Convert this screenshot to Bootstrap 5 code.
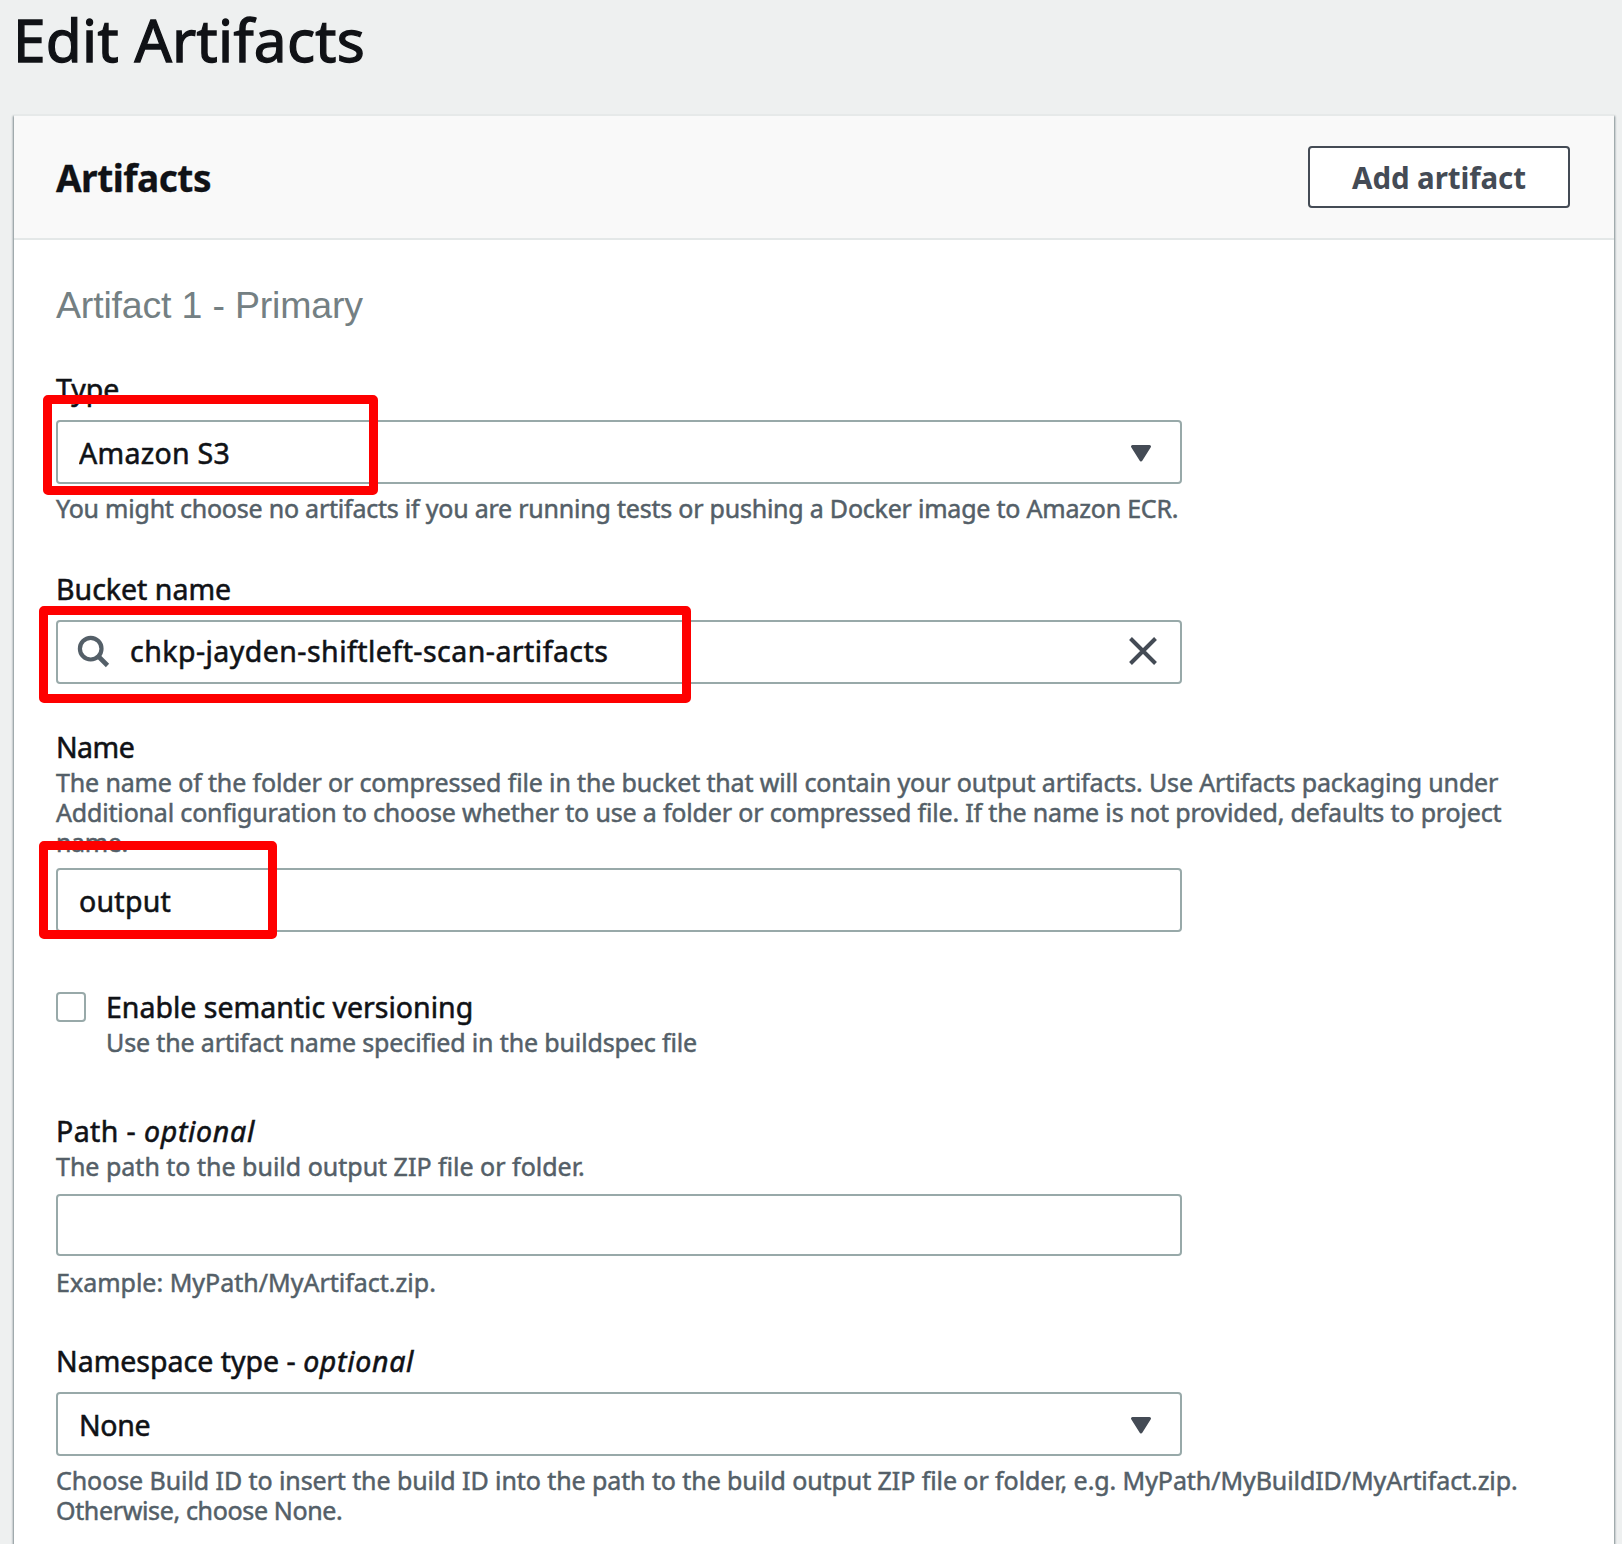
<!DOCTYPE html>
<html lang="en">
<head>
<meta charset="utf-8">
<title>Edit Artifacts</title>
<link href="https://cdn.jsdelivr.net/npm/bootstrap@5.3.0/dist/css/bootstrap.min.css" rel="stylesheet">
<style>
  body { background: #eef0f0; color: #101216; font-family: "Noto Sans", "Open Sans", sans-serif; height: 1544px; overflow: hidden; -webkit-text-stroke: .55px; }
  .page-title { font-size: 58.5px; line-height: 78px; font-weight: 400; margin: 0 0 36px 13px; letter-spacing: .3px; -webkit-text-stroke: 1.3px; }
  .panel { margin: 0 8px 0 14px; min-height: 1450px; border: 0; border-top: 2px solid #e6e9e9; border-radius: 0; background: #fff; box-shadow: 1px 2px 2px #001c2470, -1px 2px 2px #001c2470; color: inherit; }
  .panel-head { height: 124px; background: #f9f9f9; border-bottom: 2px solid #e4e8e8; padding: 0 44px 0 42px; }
  .panel-head h2 { font-size: 37px; line-height: 50px; font-weight: 700; margin: 0; padding-top: 1px; letter-spacing: -.5px; -webkit-text-stroke: .3px; }
  .btn-add { width: 262px; height: 62px; padding: 2px 0 0; border: 2px solid #444b55; border-radius: 4px; background: #fff; color: #444b55; font-size: 29.5px; font-weight: 700; letter-spacing: -.1px; -webkit-text-stroke: 0; }
  .panel-body { padding: 43px 42px 0; }
  .section-name { font-family: "Liberation Sans", Arial, sans-serif; font-size: 37.5px; line-height: 44px; font-weight: 400; color: #748083; margin: 0 0 42px; letter-spacing: -.18px; -webkit-text-stroke: 0; }
  .field-label { display: block; font-size: 28.5px; line-height: 40px; margin: 0; letter-spacing: 0; }
  .field-label em { letter-spacing: .7px; }
  .hint { font-size: 25px; line-height: 30px; color: #545f68; margin: 0; white-space: nowrap; letter-spacing: -.14px; -webkit-text-stroke: .5px; }
  .ls-0 { letter-spacing: 0; }
  .ls-wide { letter-spacing: .4px; }
  .ls-tight { letter-spacing: -.22px; }
  .ls-mid { letter-spacing: -.17px; }
  .ls-snug { letter-spacing: -.08px; }
  .ls-close { letter-spacing: -.35px; }
  .field { position: relative; width: 1126px; margin-top: 11px; }
  .field .form-control, .field .form-select { height: 64px; padding: 1px 60px 0 21px; border: 2px solid #98a9a9; border-radius: 4px; background: #fff; color: #101216; font-size: 28.5px; line-height: 59px; letter-spacing: .25px; -webkit-text-stroke: .55px; }
  .field .form-select { padding-top: 2px; line-height: 58px; letter-spacing: .3px; }
  .field .form-select.plain { letter-spacing: -.3px; }
  .field .form-control.has-icon { padding: 0 60px 2px 72px; line-height: 58px; letter-spacing: .46px; }
  .field .form-control.slim { height: 62px; }
  .field-path { margin-top: 13px; }
  .field-icon { position: absolute; pointer-events: none; }
  .icon-caret { left: 1074px; top: 23.5px; }
  .icon-search { left: 21px; top: 15px; }
  .icon-clear { left: 1071px; top: 15px; }
  .callout { position: absolute; border: 9px solid #fe0000; border-radius: 5px; pointer-events: none; z-index: 2; }
  .callout-type { left: -13px; top: -25px; width: 335px; height: 100px; }
  .callout-bucket { left: -17px; top: -14px; width: 652px; height: 97px; }
  .callout-name { left: -17px; top: -27px; width: 238px; height: 98px; }
  .after-field { margin: 9px 0 46px; }
  .after-path { margin: 11px 0 44px; }
  .check-row { margin: 55px 0 54px; gap: 20px; }
  .name-label { margin-top: 43px; letter-spacing: -.55px; }
  .form-check-input.box { width: 30px; height: 30px; margin: 5px 0 0; border: 2px solid #98a9a9; border-radius: 4px; float: none; flex: none; }
</style>
<script src="https://cdn.jsdelivr.net/npm/bootstrap@5.3.0/dist/js/bootstrap.bundle.min.js"></script>
</head>
<body>
<h1 class="page-title">Edit Artifacts</h1>
<main class="card panel">
  <div class="panel-head d-flex align-items-center justify-content-between">
    <h2>Artifacts</h2>
    <button type="button" class="btn btn-add">Add artifact</button>
  </div>
  <form class="panel-body">
    <h3 class="section-name">Artifact 1 - Primary</h3>

    <label class="field-label" for="type">Type</label>
    <div class="field">
      <select class="form-select" id="type"><option>Amazon S3</option></select>
      <svg class="field-icon icon-caret" width="22" height="19" viewBox="0 0 22 19"><path d="M2.500 2.500h17L11 16z" fill="#444b55" stroke="#444b55" stroke-width="3" stroke-linejoin="round"/></svg>
      <div class="callout callout-type"></div>
    </div>
    <p class="hint after-field ls-tight">You might choose no artifacts if you are running tests or pushing a Docker image to Amazon ECR.</p>

    <label class="field-label" for="bucket">Bucket name</label>
    <div class="field">
      <input class="form-control has-icon" id="bucket" value="chkp-jayden-shiftleft-scan-artifacts">
      <svg class="field-icon icon-search" width="34" height="34" viewBox="0 0 34 34" fill="none" stroke="#545f68" stroke-width="4.200"><circle cx="13.700" cy="13.700" r="10.800"/><path d="M21.500 21.500l9 9" stroke-width="4.600"/></svg>
      <svg class="field-icon icon-clear" width="32" height="32" viewBox="0 0 32 32" fill="none" stroke="#444b55" stroke-width="4"><path d="M3.500 3.500l25 25M28.500 3.500l-25 25"/></svg>
      <div class="callout callout-bucket"></div>
    </div>

    <label class="field-label name-label" for="name">Name</label>
    <p class="hint">The name of the folder or compressed file in the bucket that will contain your output artifacts. Use Artifacts packaging under<br><span class="ls-mid">Additional configuration to choose whether to use a folder or compressed file. If the name is not provided, defaults to project</span><br><span class="ls-close">name.</span></p>
    <div class="field">
      <input class="form-control" id="name" value="output">
      <div class="callout callout-name"></div>
    </div>

    <div class="check-row d-flex">
      <input class="form-check-input box" type="checkbox" id="semver">
      <div>
        <label class="field-label" for="semver">Enable semantic versioning</label>
        <p class="hint">Use the artifact name specified in the buildspec file</p>
      </div>
    </div>

    <label class="field-label" for="path"><span class="ls-wide">Path - </span><em>optional</em></label>
    <p class="hint ls-0">The path to the build output ZIP file or folder.</p>
    <div class="field field-path"><input class="form-control slim" id="path"></div>
    <p class="hint after-path ls-0">Example: MyPath/MyArtifact.zip.</p>

    <label class="field-label" for="ns">Namespace type - <em>optional</em></label>
    <div class="field">
      <select class="form-select plain" id="ns"><option>None</option></select>
      <svg class="field-icon icon-caret" width="22" height="19" viewBox="0 0 22 19"><path d="M2.500 2.500h17L11 16z" fill="#444b55" stroke="#444b55" stroke-width="3" stroke-linejoin="round"/></svg>
    </div>
    <p class="hint after-field ls-snug">Choose Build ID to insert the build ID into the path to the build output ZIP file or folder, e.g. MyPath/MyBuildID/MyArtifact.zip.<br><span class="ls-close">Otherwise, choose None.</span></p>
  </form>
</main>
</body>
</html>
